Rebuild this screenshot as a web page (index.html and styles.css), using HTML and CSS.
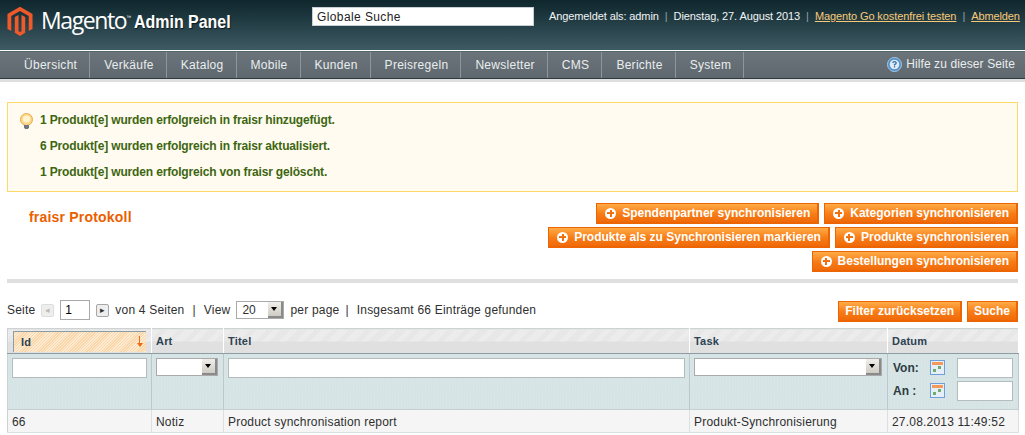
FILE: index.html
```html
<!DOCTYPE html>
<html lang="de">
<head>
 <meta charset="UTF-8">
 <title>fraisr Protokoll / Magento Admin</title>
 <link rel="stylesheet" href="styles.css">
</head>
<body>
 <div class="header">
  <div class="logo">
   <svg class="logo-mark" width="26" height="31" viewBox="0 0 28 32">
    <path fill="#f0592a" d="M14 0 L27.5 7.8 V24 L23.4 26.3 V10.2 L14 4.8 L4.6 10.2 V26.3 L.5 24 V7.8 Z"/>
    <path fill="#f0592a" d="M12.4 8.9 V26.4 L14 27.4 L15.6 26.4 V8.9 L19.6 11.2 V28.2 L14 31.6 L8.4 28.2 V11.2 Z"/>
   </svg>
   <span class="logo-name">Magento</span><span class="logo-tm">™</span>
   <span class="logo-panel">Admin Panel</span>
  </div>
  <input class="global-search" type="text" value="Globale Suche">
  <div class="header-info">
   Angemeldet als: admin<span class="sep">|</span>Dienstag, 27. August 2013<span class="sep">|</span><a href="#">Magento Go kostenfrei testen</a><span class="sep">|</span><a href="#">Abmelden</a>
  </div>
 </div>

 <div class="nav">
  <ul class="nav-list">
   <li>Übersicht</li>
   <li>Verkäufe</li>
   <li>Katalog</li>
   <li>Mobile</li>
   <li>Kunden</li>
   <li>Preisregeln</li>
   <li>Newsletter</li>
   <li>CMS</li>
   <li>Berichte</li>
   <li>System</li>
  </ul>
  <div class="nav-help">
   <svg width="15" height="15" viewBox="0 0 15 15">
    <circle cx="7.5" cy="7.5" r="7" fill="#4f8fc9" stroke="#a9c9e4"/>
    <circle cx="7.5" cy="7.5" r="4.8" fill="#dfeaf4"/>
    <path d="M5.8 6 Q6 4.6 7.5 4.6 Q9.2 4.6 9.2 6 Q9.2 6.9 7.5 7.6 V8.4" fill="none" stroke="#2f6ea6" stroke-width="1.3"/>
    <rect x="6.9" y="9.2" width="1.3" height="1.3" fill="#2f6ea6"/>
   </svg>
   Hilfe zu dieser Seite
  </div>
 </div>
 <div class="nav-line"></div>

 <div class="content">
  <div class="messages">
   <svg class="bulb" width="15" height="16" viewBox="0 0 15 16">
    <circle cx="7.5" cy="6.5" r="6" fill="#fbd98a" stroke="#eba94a"/>
    <circle cx="7.5" cy="6" r="3.6" fill="#fff4cf"/>
    <path d="M5 12 H10 V14.5 L9 16 H6 L5 14.5 Z" fill="#6f7680"/>
   </svg>
   <p>1 Produkt[e] wurden erfolgreich in fraisr hinzugefügt.</p>
   <p>6 Produkt[e] wurden erfolgreich in fraisr aktualisiert.</p>
   <p>1 Produkt[e] wurden erfolgreich von fraisr gelöscht.</p>
  </div>

  <div class="page-head">
   <h3>fraisr Protokoll</h3>
   <div class="actions">
    <div class="actions-row">
     <button class="btn"><i class="plus"></i>Spendenpartner synchronisieren</button>
     <button class="btn"><i class="plus"></i>Kategorien synchronisieren</button>
    </div>
    <div class="actions-row">
     <button class="btn"><i class="plus"></i>Produkte als zu Synchronisieren markieren</button>
     <button class="btn"><i class="plus"></i>Produkte synchronisieren</button>
    </div>
    <div class="actions-row">
     <button class="btn"><i class="plus"></i>Bestellungen synchronisieren</button>
    </div>
   </div>
  </div>

  <div class="pager">
   <div class="pager-left">
    Seite
    <span class="arrow arrow-off">◂</span>
    <input class="page-input" type="text" value="1">
    <span class="arrow">▸</span>
    von 4 Seiten
    <span class="pipe">|</span>
    View
    <span class="select select-view">20<i class="select-arrow"></i></span>
    per page
    <span class="pipe pipe-tight">|</span>
    Insgesamt 66 Einträge gefunden
   </div>
   <div class="pager-right">
    <button class="btn btn-plain">Filter zurücksetzen</button>
    <button class="btn btn-plain">Suche</button>
   </div>
  </div>

  <table class="grid">
   <colgroup>
    <col class="col-id"><col class="col-art"><col class="col-title"><col class="col-task"><col class="col-date">
   </colgroup>
   <thead>
    <tr class="headings">
     <th class="sorted"><span class="sort-box">Id<i class="sort-arrow"></i></span></th>
     <th>Art</th>
     <th>Titel</th>
     <th>Task</th>
     <th>Datum</th>
    </tr>
    <tr class="filter">
     <th><input class="filter-input" type="text"></th>
     <th><span class="select select-art"><i class="select-arrow"></i></span></th>
     <th><input class="filter-input" type="text"></th>
     <th><span class="select select-task"><i class="select-arrow"></i></span></th>
     <th>
      <div class="range">
       <b>Von:</b>
       <svg class="cal" width="15" height="15" viewBox="0 0 15 15">
        <rect x=".5" y=".5" width="14" height="14" fill="#e6eef8" stroke="#6f9fd8"/>
        <rect x="2" y="2" width="11" height="3" fill="#f59a5a"/>
        <rect x="3" y="9" width="3" height="3" fill="#6fae6a"/>
        <rect x="8" y="6" width="3" height="3" fill="#6fae6a"/>
       </svg>
       <input class="range-input" type="text">
      </div>
      <div class="range">
       <b>An :</b>
       <svg class="cal" width="15" height="15" viewBox="0 0 15 15">
        <rect x=".5" y=".5" width="14" height="14" fill="#e6eef8" stroke="#6f9fd8"/>
        <rect x="2" y="2" width="11" height="3" fill="#f59a5a"/>
        <rect x="3" y="9" width="3" height="3" fill="#6fae6a"/>
        <rect x="8" y="6" width="3" height="3" fill="#6fae6a"/>
       </svg>
       <input class="range-input" type="text">
      </div>
     </th>
    </tr>
   </thead>
   <tbody>
    <tr>
     <td>66</td>
     <td>Notiz</td>
     <td>Product synchronisation report</td>
     <td>Produkt-Synchronisierung</td>
     <td>27.08.2013 11:49:52</td>
    </tr>
   </tbody>
  </table>
 </div>
</body>
</html>
```

FILE: styles.css
```css
* {
box-sizing: border-box;
}
html, body {
height: 435px;
overflow: hidden;
}
body {
margin: 0;
font-family: "Liberation Sans", Arial, sans-serif;
font-size: 12px;
color: #2f2f2f;
background: #fff;
}
.header {
display: flex;
height: 50px;
background: linear-gradient(#0e262c, #3e5a64);
color: #f1f4f5;
font-size: 11px;
}
.logo {
display: flex;
flex: none;
align-items: baseline;
width: 312px;
padding: 6px 0 0 7px;
color: #fff;
}
.logo-mark {
align-self: flex-start;
margin-right: 8px;
}
.logo-name {
font-family: "Open Sans", sans-serif;
font-size: 23px;
letter-spacing: -1.4px;
position: relative;
top: -2px;
}
.logo-tm {
font-size: 5px;
position: relative;
top: -12px;
}
.logo-panel {
display: inline-block;
font-weight: bold;
font-size: 19px;
margin-left: 3px;
text-shadow: 1px 1px 1px #0b1c20;
white-space: nowrap;
transform: scaleX(.84);
transform-origin: left;
position: relative;
top: -3px;
}
.global-search {
flex: none;
width: 222px;
height: 19px;
margin-top: 7px;
padding: 0 4px;
border: 1px solid #c8cfd2;
font: 12px "Liberation Sans", sans-serif;
letter-spacing: .4px;
color: #222;
}
.header-info {
margin: 10px 0 0 15px;
white-space: nowrap;
letter-spacing: -.1px;
}
.header-info a {
color: #f6c97a;
}
.sep {
margin: 0 6px;
color: #8fa3ab;
}
.nav {
display: flex;
justify-content: space-between;
height: 28px;
margin-top: 1px;
background: linear-gradient(#6b747a, #5f686e);
color: #e9edef;
letter-spacing: .28px;
border-top: 1px solid #54666e;
border-bottom: 1px solid #2c3b42;
}
.nav-list {
display: flex;
margin: 0;
padding: 0 0 0 10px;
list-style: none;
}
.nav-list li {
padding: 6px 12px 0 14px;
border-right: 1px solid #8e969b;
}
.nav-help {
padding: 5px 10px 0 0;
display: flex;
gap: 4px;
letter-spacing: .1px;
}
.nav-line {
height: 3px;
background: #dfdfdf;
}
.content {
padding: 20px 7px 0;
}
.messages {
position: relative;
height: 90px;
padding: 7px 0 0 32px;
background: #fffbf0;
border: 1px solid #ffd967;
color: #3d6611;
font-size: 12px;
letter-spacing: -.16px;
font-weight: bold;
}
.messages p {
margin: 0;
height: 26px;
line-height: 20px;
}
.bulb {
position: absolute;
left: 11px;
top: 10px;
}
.page-head {
display: flex;
justify-content: space-between;
height: 91px;
padding: 11px 0 0 22px;
border-bottom: 4px solid #dfdfdf;
}
.page-head h3 {
margin: 6px 0 0;
font-size: 14px;
color: #eb5e00;
letter-spacing: .2px;
}
.actions-row {
display: flex;
justify-content: flex-end;
gap: 5px;
margin-bottom: 3px;
}
.btn {
display: inline-flex;
align-items: center;
height: 21px;
padding: 0 7px 0 8px;
border: 1px solid #ed6502;
border-width: 1px 2px 2px 1px;
background: linear-gradient(#ffac47, #f77c16 55%, #f06a0a);
color: #fff;
font: bold 12px "Liberation Sans", sans-serif;
white-space: nowrap;
}
.btn-plain {
padding: 0 6px;
}
.plus {
position: relative;
width: 11px;
height: 11px;
margin: 0 6px 0 0;
border-radius: 50%;
background: #fff;
}
.plus::before,
.plus::after {
content: "";
position: absolute;
background: #f0710f;
}
.plus::before {
left: 2px;
top: 4.5px;
width: 7px;
height: 2px;
}
.plus::after {
left: 4.5px;
top: 2px;
width: 2px;
height: 7px;
}
.pager {
display: flex;
justify-content: space-between;
align-items: center;
height: 45px;
padding-top: 12px;
}
.pager-left {
display: flex;
align-items: center;
gap: 6px;
white-space: nowrap;
letter-spacing: .2px;
margin-top: -3px;
}
.pager-right {
display: flex;
gap: 5px;
}
.arrow {
width: 13px;
height: 13px;
border: 1px solid #a6a6a6;
border-radius: 2px;
background: #eee;
font-size: 9px;
line-height: 11px;
text-align: center;
color: #333;
}
.arrow-off {
border-color: #ddd;
color: #bbb;
}
.page-input {
width: 30px;
height: 20px;
padding: 0 4px;
border: 1px solid #aaa;
font: 12px "Liberation Sans", sans-serif;
}
.pipe {
margin: 0 2px;
color: #2f2f2f;
}
.pipe-tight {
margin-left: 0;
}
.select {
position: relative;
display: inline-block;
height: 18px;
padding-left: 5px;
border: 1px solid #aaa;
background: #fff;
line-height: 16px;
}
.select-view {
width: 48px;
letter-spacing: 0;
}
.select-art {
display: block;
width: 62px;
}
.select-task {
display: block;
width: 188px;
}
.select-arrow {
position: absolute;
right: 0;
top: 0;
bottom: 0;
width: 15px;
background: linear-gradient(#f1efea, #cfccc5);
border-right: 2px solid #8a8a8a;
border-bottom: 2px solid #8a8a8a;
}
.select-arrow::after {
content: "";
position: absolute;
left: 3px;
top: 5px;
border: 3.5px solid transparent;
border-top: 4px solid #000;
border-bottom: 0;
}
.grid {
width: 1011px;
table-layout: fixed;
border-collapse: collapse;
border: 1px solid #cbd3d4;
border-width: 1px 1px 0;
}
.col-id { width: 144px; }
.col-art { width: 72px; }
.col-title { width: 466px; }
.col-task { width: 198px; }
.col-date { width: 131px; }
.headings th {
height: 25px;
padding: 0 4px;
text-align: left;
font-size: 11px;
color: #2d4252;
letter-spacing: .2px;
background:
 linear-gradient(transparent 12px, #e0e0e0 12px),
 repeating-linear-gradient(135deg, #f1f1f1 0 1px, #e2e2e2 1px 2px);
border-right: 1px solid #fff;
border-bottom: 1px solid #8d9da3;
}
.headings th.sorted {
padding: 2px 5px 1px;
}
.sort-box {
position: relative;
display: block;
height: 21px;
padding-left: 7px;
line-height: 21px;
background: repeating-linear-gradient(135deg, #fdebd4 0 1px, #f9d5a8 1px 2px);
border-left: 1px solid #8d9da3;
border-top: 1px solid #8d9da3;
}
.sort-arrow {
position: absolute;
right: 6px;
top: 4px;
width: 1px;
height: 10px;
background: #f26a0c;
}
.sort-arrow::after {
content: "";
position: absolute;
left: -2.5px;
bottom: -1px;
border: 3px solid transparent;
border-top: 4px solid #f26a0c;
border-bottom: 0;
}
.filter th {
height: 56px;
padding: 4px;
vertical-align: top;
text-align: left;
background: repeating-conic-gradient(#d3e1e2 0 25%, #dae8e9 0 50%) 0 0 / 3px 3px;
border-right: 1px solid #bcc8ca;
border-bottom: 1px solid #c5cfd0;
font-size: 12px;
}
.filter-input {
display: block;
width: 100%;
height: 20px;
border: 1px solid #b5bcbe;
}
.range {
display: flex;
align-items: flex-start;
height: 23px;
padding-left: 1px;
font-size: 12px;
color: #2d3b42;
}
.range b {
width: 37px;
line-height: 21px;
}
.cal {
margin-top: 2px;
}
.range-input {
width: 56px;
height: 20px;
margin-left: 12px;
border: 1px solid #b5bcbe;
}
.grid td {
height: 23px;
padding: 1px 4px 0;
background: #f5f5f5;
border-right: 1px solid #dadfe0;
border-bottom: 1px solid #dadfe0;
color: #2f2f2f;
letter-spacing: .2px;
}
```
